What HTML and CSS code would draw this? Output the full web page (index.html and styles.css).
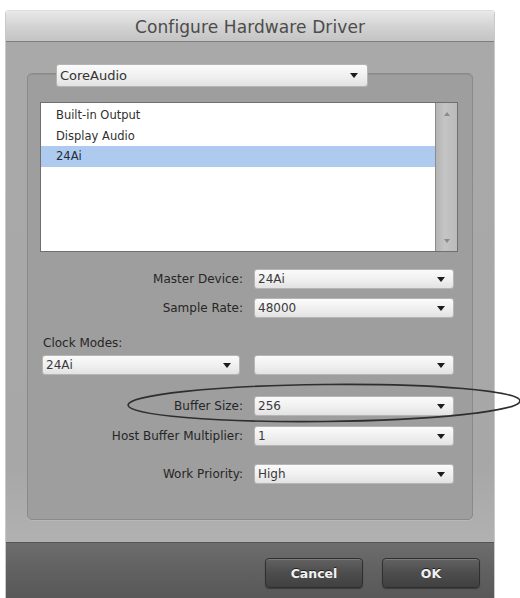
FILE: index.html
```html
<!DOCTYPE html>
<html>
<head>
<meta charset="utf-8">
<link rel="stylesheet" href="styles.css">
</head>
<body>
<div class="window">
  <div class="titlebar">Configure Hardware Driver</div>
  <div class="content">
    <div class="group">
      <div class="popup driver"><span class="val">CoreAudio</span><i class="arrow"></i></div>
      <div class="list">
        <div class="rows">
          <div class="row">Built-in Output</div>
          <div class="row">Display Audio</div>
          <div class="row selected">24Ai</div>
        </div>
        <div class="scrollbar"><span class="sarrow up"></span><span class="sarrow down"></span></div>
      </div>
      <div class="field master"><span class="label">Master Device:</span><div class="popup"><span class="val">24Ai</span><i class="arrow"></i></div></div>
      <div class="field rate"><span class="label">Sample Rate:</span><div class="popup"><span class="val">48000</span><i class="arrow"></i></div></div>
      <div class="clock-label">Clock Modes:</div>
      <div class="clock-row">
        <div class="popup clock"><span class="val">24Ai</span><i class="arrow"></i></div>
        <div class="popup"><span class="val"></span><i class="arrow"></i></div>
      </div>
      <div class="field buffer"><span class="label">Buffer Size:</span><div class="popup"><span class="val">256</span><i class="arrow"></i></div></div>
      <div class="field host"><span class="label">Host Buffer Multiplier:</span><div class="popup"><span class="val">1</span><i class="arrow"></i></div></div>
      <div class="field work"><span class="label">Work Priority:</span><div class="popup"><span class="val">High</span><i class="arrow"></i></div></div>
    </div>
  </div>
  <div class="footer">
    <button class="btn">Cancel</button>
    <button class="btn">OK</button>
  </div>
</div>
<svg class="annotation" width="520" height="60" viewBox="0 0 520 60">
  <ellipse cx="324" cy="28" rx="196" ry="18.5" fill="none" stroke="#2e2e2e" stroke-width="1.6" transform="rotate(-0.6 324 28)"/>
</svg>
</body>
</html>
```

FILE: styles.css
```css
* { box-sizing: border-box; }
html, body { margin: 0; padding: 0; background: #ffffff; }
body {
  position: relative;
  width: 520px;
  height: 598px;
  overflow: hidden;
  font-family: "DejaVu Sans", "Liberation Sans", sans-serif;
}
.window {
  margin: 10px 0 0 5px;
  width: 490px;
  height: 588px;
  border-left: 1px solid #c9c9c9;
  border-right: 1px solid #c9c9c9;
  border-radius: 4px 4px 0 0;
  overflow: hidden;
  display: flex;
  flex-direction: column;
}
.titlebar {
  height: 32px;
  flex: none;
  background: linear-gradient(#e9e9e9, #d3d3d3 50%, #c4c4c4);
  border-top: 1px solid #dedede;
  border-bottom: 1px solid #7e7e7e;
  display: flex;
  align-items: center;
  justify-content: center;
  padding-top: 2px;
  font-size: 17px;
  color: #4c4c4c;
  letter-spacing: 0.1px;
}
.content {
  flex: none;
  height: 500px;
  background: linear-gradient(#a9a9a9, #a7a7a7 85%, #b1b1b1);
  padding: 31px 0 0 21px;
}
.group {
  width: 446px;
  height: 447px;
  border: 1px solid #8a8a8a;
  border-radius: 5px;
  background: #9e9e9e;
  box-shadow: inset 0 1px 0 #939393, 0 1px 0 #b8b8b8;
  display: flex;
  flex-direction: column;
}
.popup {
  display: flex;
  align-items: center;
  justify-content: space-between;
  width: 198px;
  height: 18px;
  background: linear-gradient(#fbfbfb, #eeeeee 60%, #e2e2e2);
  border-radius: 2px;
  box-shadow: 0 0 0 1px #b5b5b5;
  padding: 0 8px 0 3px;
  font-size: 12px;
  color: #3a3a3a;
}
.val { white-space: nowrap; }
.arrow {
  width: 0;
  height: 0;
  border-left: 4px solid transparent;
  border-right: 4px solid transparent;
  border-top: 5px solid #1c1c1c;
}
.popup.driver {
  margin: -9px 0 0 29px;
  width: 310px;
  height: 21px;
  font-size: 13px;
  padding: 0 9px 0 3px;
  color: #333;
}
.list {
  margin: 16px 0 0 12px;
  width: 418px;
  height: 150px;
  border: 1px solid #6f6f6f;
  display: flex;
  background: #fff;
}
.rows {
  flex: 1;
  padding-top: 2px;
  border-right: 1px solid #8c8c8c;
}
.row {
  height: 20.5px;
  line-height: 20.5px;
  padding-left: 15px;
  font-size: 11.5px;
  color: #2f2f2f;
}
.row.selected {
  background: #aecaee;
  color: #1f2a3c;
}
.scrollbar {
  width: 21px;
  background: linear-gradient(90deg, #b4b4b4, #c4c4c4 40%, #bbbbbb);
  display: flex;
  flex-direction: column;
  justify-content: space-between;
  align-items: center;
  padding: 9px 0 8px;
}
.sarrow {
  width: 0;
  height: 0;
  border-left: 3px solid transparent;
  border-right: 3px solid transparent;
}
.sarrow.up { border-bottom: 4px solid #8a8a8a; }
.sarrow.down { border-top: 4px solid #8a8a8a; }
.field {
  display: flex;
  align-items: center;
  gap: 12px;
}
.label {
  width: 215px;
  text-align: right;
  font-size: 12px;
  color: #262626;
  white-space: nowrap;
}
.field.master { margin-top: 18px; }
.field.rate { margin-top: 11px; }
.clock-label {
  margin: 18px 0 0 15px;
  height: 16px;
  line-height: 16px;
  font-size: 12px;
  color: #262626;
}
.clock-row {
  margin: 5px 0 0 15px;
  display: flex;
  gap: 16px;
}
.popup.clock { width: 196px; }
.field.buffer { margin-top: 23px; }
.field.host { margin-top: 12px; }
.field.work { margin-top: 20px; }
.footer {
  flex: 1;
  background: linear-gradient(#6d6d6d, #616161 50%, #585858);
  border-top: 1px solid #545454;
  display: flex;
  justify-content: flex-end;
  align-items: flex-start;
  gap: 19px;
  padding: 15px 14px 0 0;
}
.btn {
  width: 98px;
  height: 30px;
  border: 1px solid #2f2f2f;
  border-radius: 4px;
  background: linear-gradient(#626262, #4d4d4d 50%, #404040);
  box-shadow: inset 0 1px 0 #7a7a7a, 0 1px 1px rgba(0,0,0,0.35);
  color: #f2f2f2;
  font-family: "DejaVu Sans", "Liberation Sans", sans-serif;
  font-weight: bold;
  font-size: 12.5px;
  text-shadow: 0 -1px 0 #222;
  padding: 0;
}
.annotation {
  position: absolute;
  left: 0;
  top: 375px;
}
```
